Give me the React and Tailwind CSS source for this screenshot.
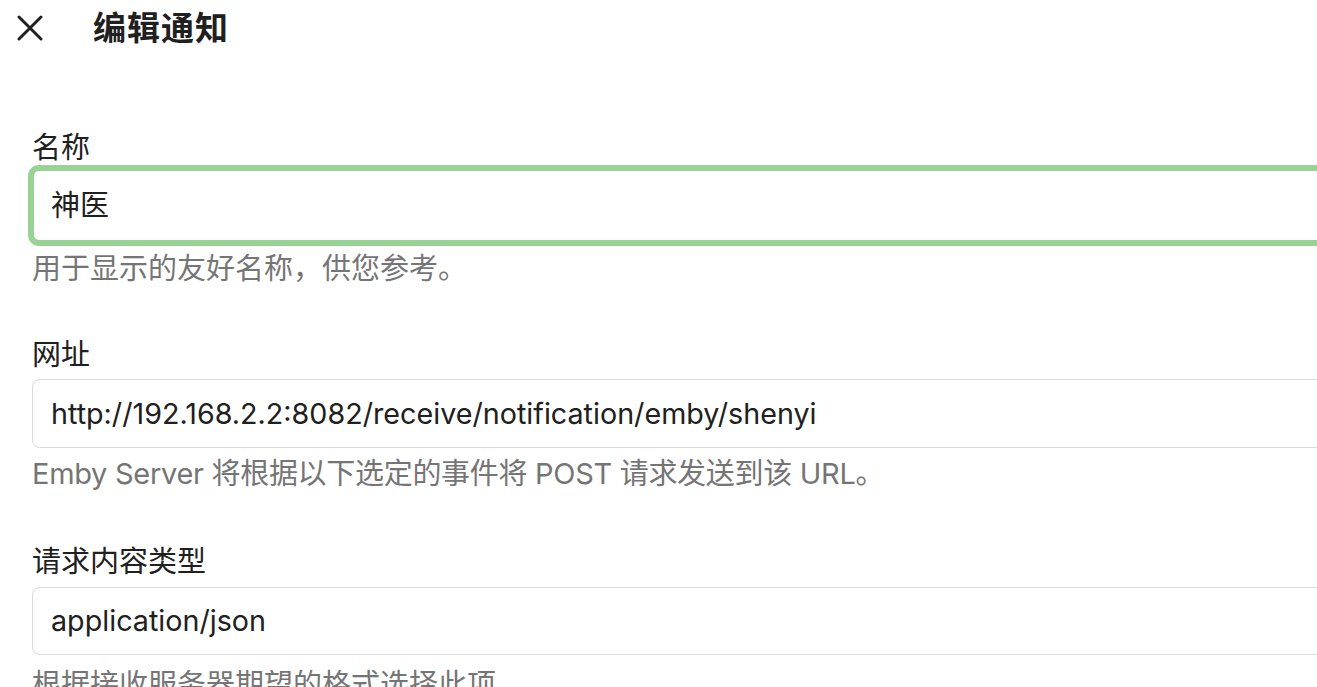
export default function App() {
  const font = { fontFamily: 'Inter, "Noto Sans CJK SC", sans-serif' };
  return (
    <div className="w-[1317px] h-[687px] overflow-hidden bg-white text-[#202020]" style={font}>
      <div className="flex items-center h-[56px] pl-[17px]">
        <svg width="26" height="26" viewBox="0 0 26 26" className="shrink-0">
          <path d="M2 2 L24 24 M24 2 L2 24" stroke="#202020" strokeWidth="3" strokeLinecap="round" />
        </svg>
        <div className="ml-[50px] text-[33px] font-bold leading-none tracking-[1px]">编辑通知</div>
      </div>
      <div className="pl-[32px] w-[1400px] pt-[74px]">
        <div className="text-[29px] leading-[36px]">名称</div>
        <div className="-mt-[1px] -ml-[4px] h-[81px] rounded-[11px] border-[6px] border-[#98d294] flex items-center pl-[17px] text-[29px]">神医</div>
        <div className="mt-[5px] text-[29px] leading-[36px] text-[#757575]">用于显示的友好名称，供您参考。</div>

        <div className="mt-[50px] text-[29px] leading-[36px]">网址</div>
        <div className="mt-[6px] h-[69px] rounded-[8px] border border-[#d9d9d9] flex items-center pl-[18px] text-[28.7px]">http://192.168.2.2:8082/receive/notification/emby/shenyi</div>
        <div className="mt-[8px] text-[29px] leading-[36px] text-[#757575] tracking-[-0.3px]">Emby Server 将根据以下选定的事件将 POST 请求发送到该 URL。</div>

        <div className="mt-[52px] text-[29px] leading-[36px]">请求内容类型</div>
        <div className="mt-[7px] h-[68px] rounded-[8px] border border-[#d9d9d9] flex items-center pl-[18px] text-[28.7px]">application/json</div>
        <div className="mt-[12px] text-[29px] leading-[36px] text-[#757575]">根据接收服务器期望的格式选择此项。</div>
      </div>
    </div>
  );
}
